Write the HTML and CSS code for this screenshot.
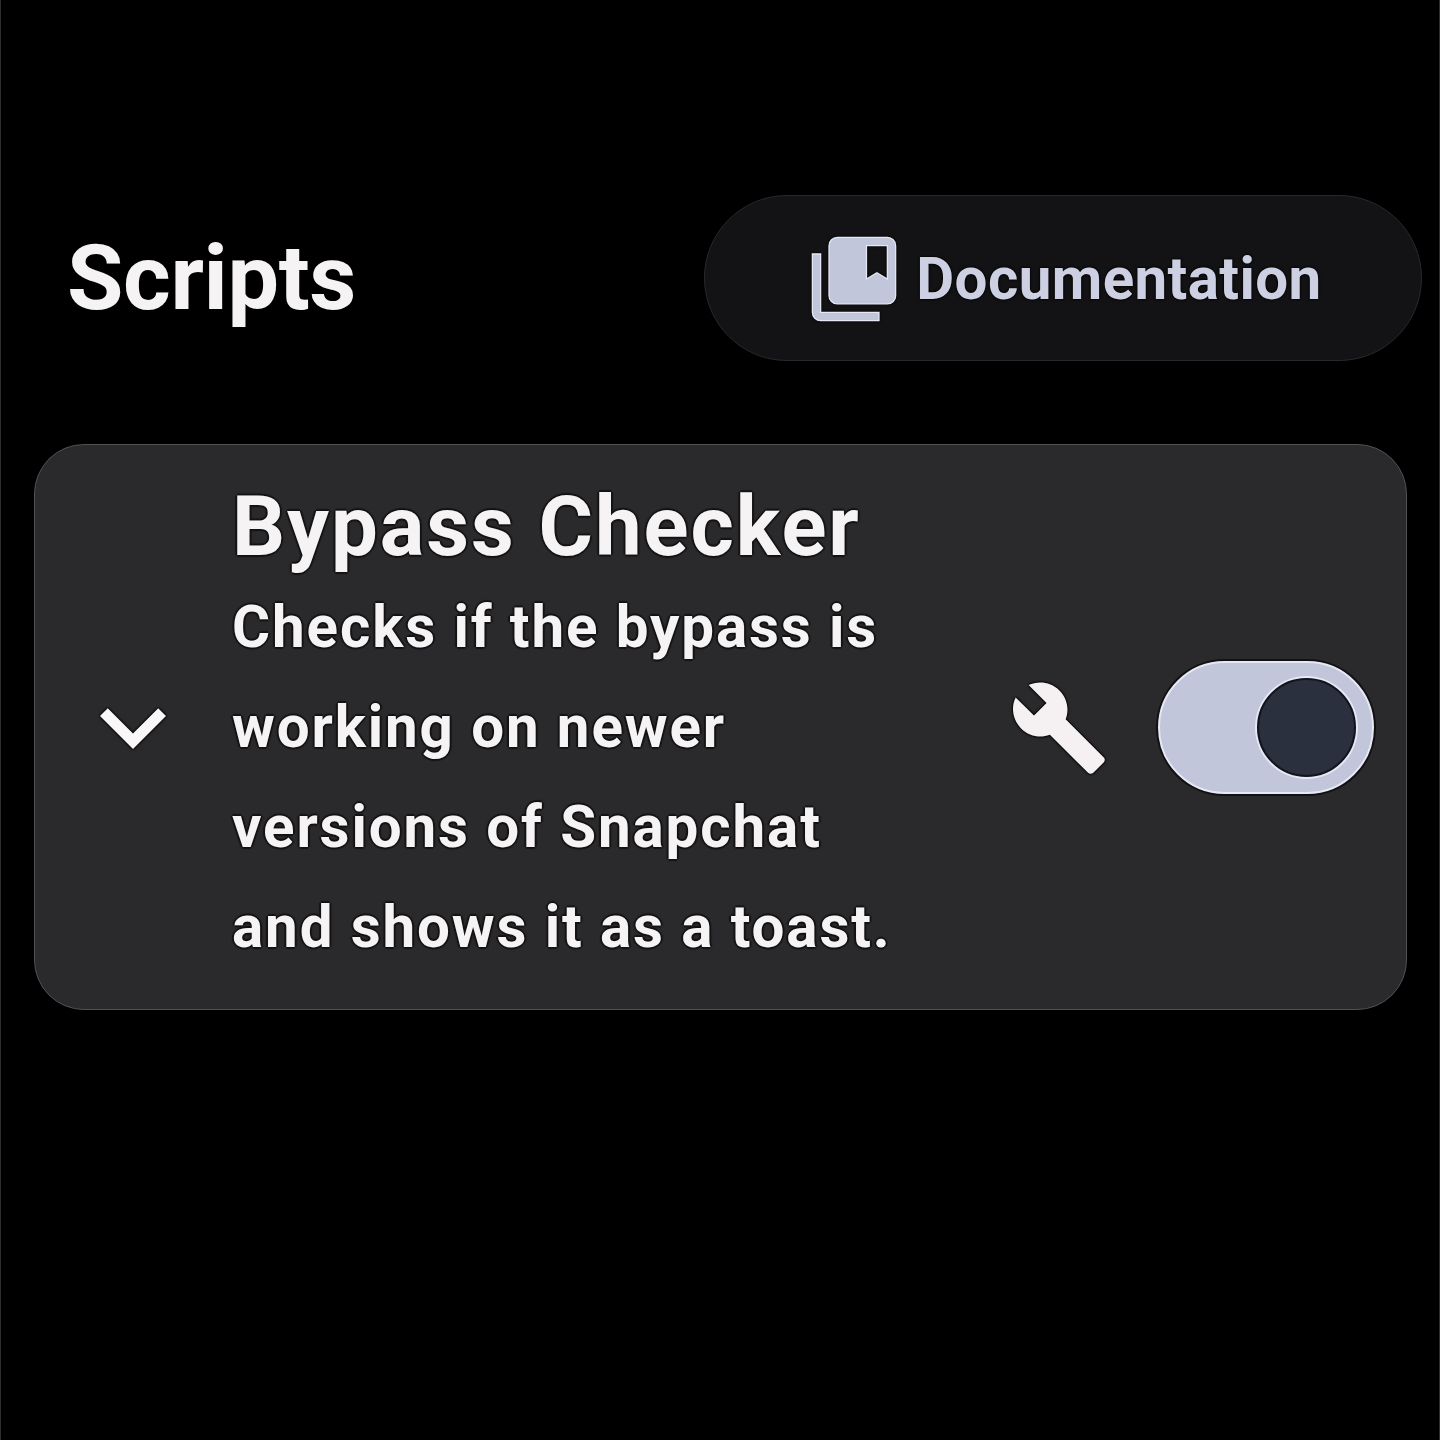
FILE: index.html
```html
<!DOCTYPE html>
<html lang="en">
<head>
<meta charset="utf-8">
<title>Scripts</title>
<link rel="stylesheet" href="styles.css">
</head>
<body>
<main class="screen">
  <header class="topbar">
    <h1 class="page-title">Scripts</h1>
    <button class="docs-button" type="button">
      <svg class="docs-icon" viewBox="0 0 24 24" aria-hidden="true">
        <path d="M4 6H2v14c0 1.1.9 2 2 2h14v-2H4z"/>
        <path fill-rule="evenodd" d="M20 2H8c-1.1 0-2 .9-2 2v12c0 1.1.9 2 2 2h12c1.1 0 2-.9 2-2V4c0-1.1-.9-2-2-2zm0 10l-2.5-1.5L15 12V4h5z"/>
      </svg>
      <span class="docs-label">Documentation</span>
    </button>
  </header>
  <section class="card">
    <svg class="chevron" viewBox="0 0 24 24" aria-hidden="true"><path d="M16.59 8.59L12 13.17 7.41 8.59 6 10l6 6 6-6z"/></svg>
    <div class="card-text">
      <h2 class="card-title">Bypass Checker</h2>
      <p class="card-desc">Checks if the bypass is<br>working on newer<br>versions of Snapchat<br>and shows it as a toast.</p>
    </div>
    <svg class="wrench" viewBox="0 0 24 24" aria-hidden="true"><path d="M22.7 19l-9.1-9.1c.9-2.3.4-5-1.5-6.9-2-2-5-2.4-7.4-1.3L9 6 6 9 1.6 4.7C.4 7.1.9 10.1 2.9 12.1c1.9 1.9 4.6 2.4 6.9 1.5l9.1 9.1c.4.4 1 .4 1.4 0l2.3-2.3c.5-.4.5-1.1.1-1.4z"/></svg>
    <div class="toggle" role="switch" aria-checked="true" aria-label="Enable script"><span class="thumb"></span></div>
  </section>
</main>
</body>
</html>
```
FILE: styles.css
```css
* { box-sizing: border-box; }

body {
  margin: 0;
  background: #000;
  font-family: Roboto, "Liberation Sans", sans-serif;
  color: #f6f3f5;
}

.screen {
  height: 1440px;
  padding: 195px 17px 0 33px;
  border: solid #2f2f30;
  border-width: 0 1px;
}

.topbar {
  display: flex;
  align-items: center;
  justify-content: space-between;
  height: 166px;
  padding-left: 33px;
}

.page-title {
  margin: 0;
  font-size: 91.7px;
  font-weight: 700;
  letter-spacing: -0.4px;
  line-height: 116px;
}

.docs-button {
  display: flex;
  align-items: center;
  justify-content: center;
  gap: 12px;
  width: 718px;
  height: 166px;
  padding: 2px 0 0;
  border: 1px solid #29292b;
  border-radius: 83px;
  background: #131315;
  color: #cdd0e2;
  font: 700 58.3px/83px Roboto, "Liberation Sans", sans-serif;
  letter-spacing: 0.4px;
}

.docs-label {
  padding-top: 1px;
  text-shadow: 0 0 2px #000, 0 0 3px #000;
}

.docs-icon {
  width: 100px;
  height: 100px;
  fill: #c2c6da;
  stroke: #e6e9f5;
  stroke-width: 0.3;
  filter: drop-shadow(0 0 1.5px #000);
}

.card {
  display: flex;
  align-items: center;
  width: 1373px;
  height: 566px;
  margin-top: 83px;
  padding: 0 32px;
  border: 1px solid #515154;
  border-radius: 50px;
  background: #2a2a2c;
}

.chevron {
  flex: none;
  width: 132px;
  height: 132px;
  margin-right: 33px;
  fill: #f9f7f8;
  filter: drop-shadow(0 0 1px #000) drop-shadow(0 0 1px #000);
}

.card-text {
  flex: 1;
  text-shadow: 2px 0 1px #131314, -2px 0 1px #131314, 0 2px 1px #131314, 0 -2px 1px #131314;
}

.card-title {
  margin: 0;
  font-size: 83.3px;
  font-weight: 700;
  letter-spacing: 1.95px;
  line-height: 100px;
}

.card-desc {
  margin: 0;
  font-size: 58.3px;
  font-weight: 700;
  letter-spacing: 1.88px;
  line-height: 100px;
  white-space: nowrap;
}

.wrench {
  flex: none;
  width: 100px;
  height: 100px;
  margin: 2px 49px 0 0;
  fill: #f5f1f3;
  filter: drop-shadow(0 0 1px #000) drop-shadow(0 0 1px #000);
}

.toggle {
  display: flex;
  flex: none;
  align-items: center;
  justify-content: flex-end;
  width: 216px;
  height: 133px;
  padding-right: 16px;
  border: 2px solid #e6e8f4;
  border-radius: 67px;
  background: #c2c6da;
  box-shadow: 0 0 0 2px #111113;
}

.thumb {
  width: 99px;
  height: 99px;
  border: 2px solid #10141f;
  border-radius: 50%;
  background: #2b303f;
  box-shadow: 0 0 0 2px #e6e8f4;
}
```
